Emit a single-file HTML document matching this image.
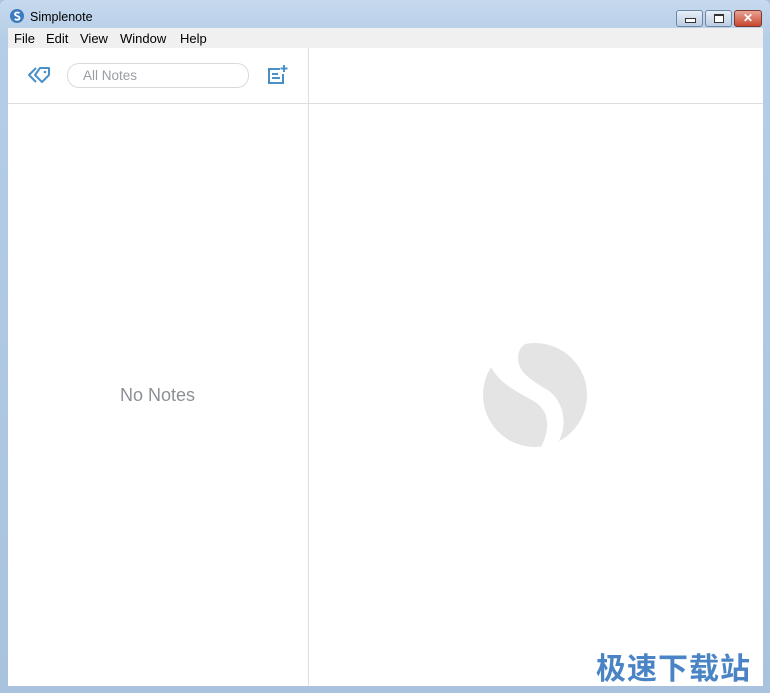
<!DOCTYPE html><html><head><style>
body{margin:0;width:770px;height:693px;overflow:hidden;background:#a9c4e0;font-family:"Liberation Sans",sans-serif;position:relative}
.win{position:absolute;left:0;top:0;width:770px;height:693px;background:linear-gradient(#c6d9ee,#b5cde6 40px,#a9c2de);border-radius:6px 6px 0 0}
.title{position:absolute;left:30px;top:10px;font-size:12.5px;color:#000}
.menu{position:absolute;left:8px;top:28px;width:755px;height:20px;background:#f0f0f0;font-size:13px}
.menu span{position:absolute;top:3px}
.content{position:absolute;left:8px;top:48px;width:755px;height:638px;background:#fff}
.wm{position:absolute;left:596px;top:644px;font-family:"Liberation Sans","Noto Sans CJK SC",sans-serif;font-size:30px;font-weight:bold;color:#4a84c4;letter-spacing:1px}
.btn{position:absolute;top:10px;height:15px;border:1px solid #6e87a6;border-radius:3px;background:linear-gradient(#e6eef8,#bccde2)}
</style></head><body><div class="win">
<svg style="position:absolute;left:10px;top:9px" width="14" height="14"><circle cx="7" cy="7" r="7" fill="#3b7bbf"/><path d="M9.5 4.2C8 3 5 3.3 5 5.2c0 2 4.5 1.5 4.5 3.8 0 2-3 2.2-4.8 1" stroke="#fff" stroke-width="1.8" fill="none"/></svg>
<div class="title">Simplenote</div>
<div class="btn" style="left:676px;width:25px"><div style="position:absolute;left:8px;top:7px;width:9px;height:3px;border:1px solid #333;background:#fff"></div></div>
<div class="btn" style="left:705px;width:25px"><div style="position:absolute;left:8px;top:3px;width:8px;height:6px;border:1px solid #333;border-top-width:2px;background:#fff"></div></div>
<div class="btn" style="left:734px;width:26px;background:linear-gradient(#e8a394,#c7462f);border-color:#7a3a30;color:#fff;font-size:12px;font-weight:bold;text-align:center;line-height:15px">✕</div>
<div class="menu"><span style="left:6px">File</span><span style="left:38px">Edit</span><span style="left:72px">View</span><span style="left:112px">Window</span><span style="left:172px">Help</span></div>
<div class="content">
<div style="position:absolute;left:300px;top:0;width:1px;height:638px;background:#dcdee0"></div>
<div style="position:absolute;left:0;top:55px;width:755px;height:1px;background:#dcdee0"></div>
<svg style="position:absolute;left:19px;top:17px" width="26" height="22"><path d="M9 3 L2 10 L9 17 M13 3 L22 3 L22 10 L15 17 L8 10 Z" stroke="#4a90c8" stroke-width="2" fill="none" stroke-linejoin="round"/><circle cx="18" cy="7" r="1.3" fill="#4a90c8"/></svg>
<div style="position:absolute;left:59px;top:15px;width:180px;height:23px;border:1px solid #d8dadc;border-radius:12px;font-size:13.5px;color:#9a9ea3;line-height:23px;text-indent:15px">All Notes</div>
<svg style="position:absolute;left:259px;top:16px" width="24" height="22"><path d="M13 5H2V19H16V10" stroke="#4a90c8" stroke-width="2" fill="none"/><path d="M5 10H11M5 14H13M17 1V8M13.5 4.5H20.5" stroke="#4a90c8" stroke-width="2"/></svg>
<div style="position:absolute;left:112px;top:337px;font-size:18px;color:#8c9096">No Notes</div>
<svg style="position:absolute;left:475px;top:295px" width="104" height="104" viewBox="0 0 104 104"><circle cx="52" cy="52" r="52" fill="#e4e4e5"/><path d="M0 0 L44 0 C38 3 35 8 35 15 C35 30 50 38 66 48 C82 60 85 85 74 101 L58 104 C68 85 66 68 52 59 C35 49 18 42 8 24 L0 24 Z" fill="#fff"/></svg>
</div>
<div class="wm">极速下载站</div>
</div></body></html>
